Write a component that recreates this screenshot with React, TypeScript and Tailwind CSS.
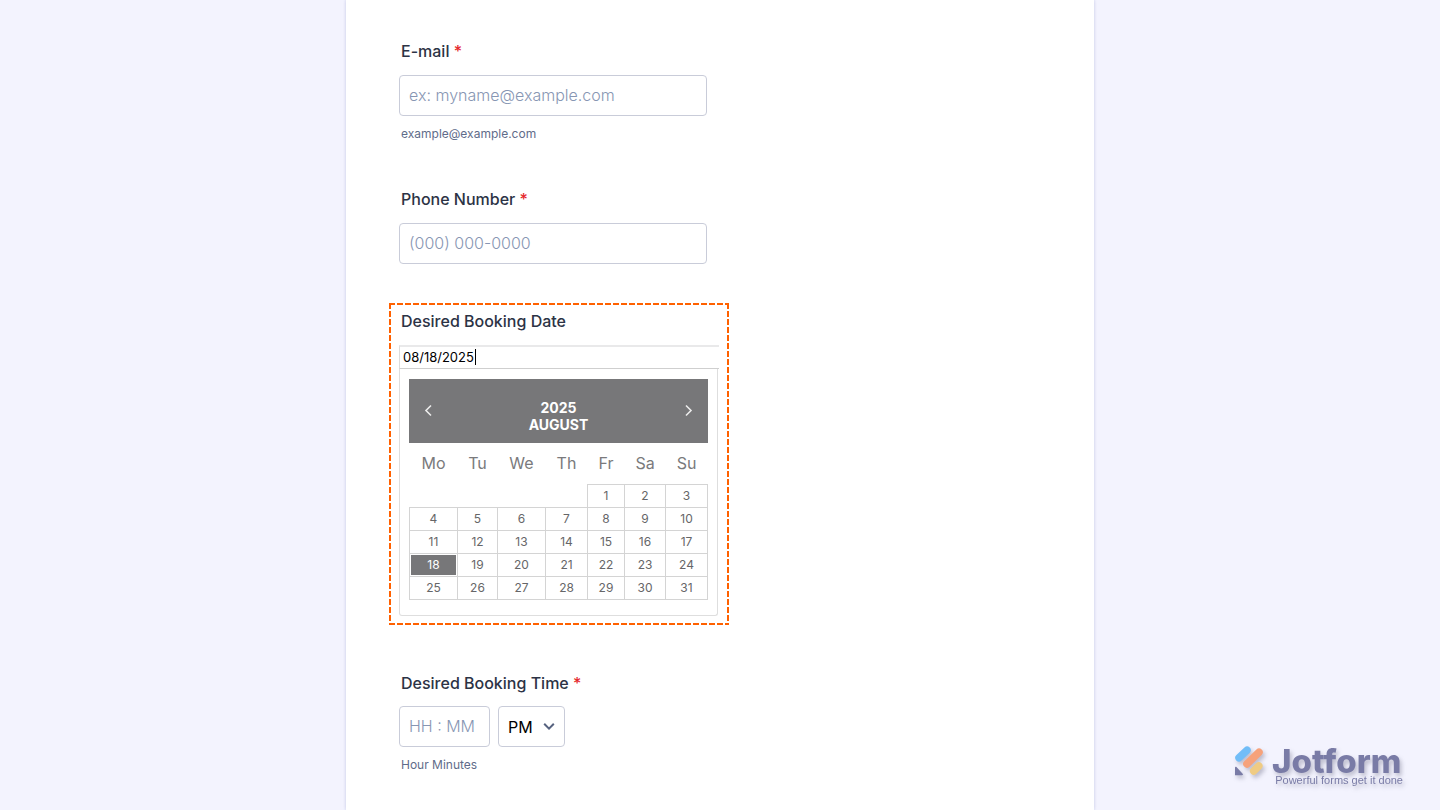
import { useState, type ReactNode } from 'react';

const WEEK_DAYS = ['Mo', 'Tu', 'We', 'Th', 'Fr', 'Sa', 'Su'];

const WEEKS: (number | null)[][] = [
  [null, null, null, null, 1, 2, 3],
  [4, 5, 6, 7, 8, 9, 10],
  [11, 12, 13, 14, 15, 16, 17],
  [18, 19, 20, 21, 22, 23, 24],
  [25, 26, 27, 28, 29, 30, 31],
];

const INPUT_CLASS =
  'block h-[41px] rounded-[4px] border border-[#c9ccd9] bg-white px-[9px] pb-0.5 text-base font-light text-[#2c3345] outline-none placeholder:text-[#8796b3]';

export default function App() {
  const [period, setPeriod] = useState('PM');

  return (
    <div className="flex min-h-screen justify-center bg-[#f3f3fe] font-['Inter',sans-serif]">
      <main className="w-full max-w-[748px] bg-white px-[53px] pt-[39px] pb-6 shadow-[0_0_3px_rgba(84,95,164,0.3)]">
        <form onSubmit={(e) => e.preventDefault()}>
          <div>
            <FieldLabel htmlFor="email" required>E-mail</FieldLabel>
            <input id="email" type="email" placeholder="ex: myname@example.com" className={`${INPUT_CLASS} mt-3 w-[308px]`} />
            <Hint>example@example.com</Hint>
          </div>

          <div className="mt-[45px]">
            <FieldLabel htmlFor="phone" required>Phone Number</FieldLabel>
            <input id="phone" type="tel" placeholder="(000) 000-0000" className={`${INPUT_CLASS} mt-3 w-[308px]`} />
          </div>

          <DateField />

          <div className="mt-[46px]">
            <FieldLabel htmlFor="time" required>Desired Booking Time</FieldLabel>
            <div className="mt-[11px] flex gap-2">
              <input id="time" placeholder="HH : MM" className={`${INPUT_CLASS} w-[91px]`} />
              <div className="relative">
                <select
                  aria-label="AM or PM"
                  value={period}
                  onChange={(e) => setPeriod(e.target.value)}
                  className="h-[41px] w-[67px] appearance-none rounded-[4px] border border-[#c9ccd9] bg-white pl-[9px] text-base text-black outline-none"
                >
                  <option>AM</option>
                  <option>PM</option>
                </select>
                <svg viewBox="0 0 12 8" className="pointer-events-none absolute top-4 right-[10px] h-2 w-3" fill="none" stroke="#56627f" strokeWidth="2">
                  <path d="M1.2 1.8 6 6.600l4.800-4.800" />
                </svg>
              </div>
            </div>
            <Hint>Hour Minutes</Hint>
          </div>
        </form>
      </main>
      <Brand />
    </div>
  );
}

function FieldLabel({ htmlFor, required, children }: { htmlFor: string; required?: boolean; children: ReactNode }) {
  return (
    <label htmlFor={htmlFor} className="block pl-0.5 text-base leading-6 font-medium text-[#2c3345]">
      {children}
      {required && <span className="text-[#e5282c]"> *</span>}
    </label>
  );
}

function Hint({ children }: { children: ReactNode }) {
  return <p className="mt-[10px] pl-0.5 text-xs leading-4 text-[#5f6c8a]">{children}</p>;
}

function DateField() {
  const [date, setDate] = useState('08/18/2025');
  const [selected, setSelected] = useState(18);

  return (
    // the dashed frame is built from four repeating strips, one for each side
    <div className="mt-[39px] -ml-[10px] h-[322px] w-[340px] bg-[linear-gradient(90deg,#ff6100_75%,transparent_75%),linear-gradient(90deg,#ff6100_75%,transparent_75%),linear-gradient(#ff6100_75%,transparent_75%),linear-gradient(#ff6100_75%,transparent_75%)] [background-position:0_0,0_100%,0_0,100%_0] [background-repeat:repeat-x,repeat-x,repeat-y,repeat-y] [background-size:8px_2px,8px_2px,2px_8px,2px_8px] px-[10px] pt-[6px]">
      <FieldLabel htmlFor="date">Desired Booking Date</FieldLabel>
      <div className="relative mt-3">
        <input
          id="date"
          value={date}
          onChange={(e) => setDate(e.target.value)}
          className="block h-6 w-full border-t-2 border-b border-l border-t-[#e9e9ea] border-b-[#cfcfcf] border-l-[#dcdcdc] bg-white pb-0.5 pl-[3px] text-[13px] text-black outline-none"
        />
        <span className="absolute top-1 left-[76px] h-4 w-px bg-black" />
      </div>

      <div className="h-[247px] w-[319px] rounded-b-[3px] border border-t-0 border-[#dedede] px-[9px] pt-[10px]">
        <div className="flex h-16 items-start justify-between bg-[#777779] px-[14px] pt-5 text-white">
          <MonthButton label="Previous month" path="M8 1.500 3 6.500 8 11.500" />
          <div className="text-center text-sm leading-[17px] font-bold">
            2025
            <br />
            AUGUST
          </div>
          <MonthButton label="Next month" path="M4 1.500 9 6.500 4 11.500" />
        </div>
        <table className="w-full table-fixed border-collapse text-center">
          <colgroup>
            <col className="w-[48px]" />
            <col className="w-[40px]" />
            <col className="w-[48px]" />
            <col className="w-[42px]" />
            <col className="w-[37px]" />
            <col className="w-[41px]" />
            <col className="w-[42px]" />
          </colgroup>
          <thead>
            <tr>
              {WEEK_DAYS.map((d) => (
                <th key={d} scope="col" className="h-[41px] p-0 align-top text-base leading-[41px] font-normal text-[#7a7a7c]">{d}</th>
              ))}
            </tr>
          </thead>
          <tbody>
            {WEEKS.map((week, i) => (
              <tr key={i}>
                {week.map((day, j) =>
                  day === null ? (
                    <td key={j} />
                  ) : (
                    <td key={j} className="h-[23px] border border-[#d4d4d4] p-px">
                      <button
                        type="button"
                        onClick={() => {
                          setSelected(day);
                          setDate(`08/${String(day).padStart(2, '0')}/2025`);
                        }}
                        className={`block h-5 w-full text-xs ${day === selected ? 'bg-[#777779] text-white' : 'text-[#666668]'}`}
                      >
                        {day}
                      </button>
                    </td>
                  ),
                )}
              </tr>
            ))}
          </tbody>
        </table>
      </div>
    </div>
  );
}

function MonthButton({ label, path }: { label: string; path: string }) {
  return (
    <button type="button" aria-label={label} className="mt-[5px] h-[13px] w-3">
      <svg viewBox="0 0 12 13" className="h-[13px] w-3" fill="none" stroke="#ececec" strokeWidth="1.600">
        <path d={path} />
      </svg>
    </button>
  );
}

function Brand() {
  return (
    <div className="fixed right-[37px] bottom-6 w-[169px] text-[#797ba6] drop-shadow-[2px_3px_2px_rgba(60,60,90,0.3)]">
      <div className="flex items-start">
        <svg viewBox="0 0 30 32" className="h-8 w-[30px] shrink-0" fill="none" strokeLinecap="round">
          <path d="M5 11.800 13 4.200" stroke="#71bdf8" strokeWidth="7.500" />
          <path d="M12.900 18 25 6.200" stroke="#f6a27b" strokeWidth="7.500" />
          <path d="M19.700 25 24.800 20" stroke="#efcb83" strokeWidth="7.500" />
          <path d="M1 22v7.200h7c1 0 1.300-.8.600-1.500L2.500 21c-.7-.7-1.500-.3-1.500 1Z" fill="#797ba6" />
        </svg>
        <span className="ml-2 text-[33px] leading-[30px] font-extrabold">Jotform</span>
      </div>
      <div className="-mt-1 text-right font-['Liberation_Sans',sans-serif] text-[11px] leading-3">Powerful forms get it done</div>
    </div>
  );
}
